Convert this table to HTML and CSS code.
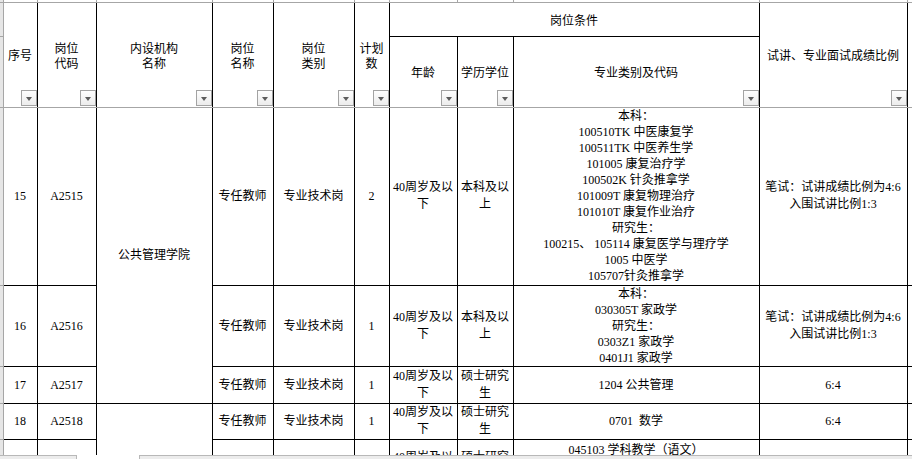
FILE: index.html
```html
<!DOCTYPE html>
<html lang="zh-CN">
<head>
<meta charset="utf-8">
<title>岗位表</title>
<link rel="stylesheet" href="styles.css">
</head>
<body>
<div class="sheet">
  <div class="grid">
    <table class="tbl">
      <colgroup>
        <col class="c-rh"><col class="c-no"><col class="c-code"><col class="c-org"><col class="c-name"><col class="c-type"><col class="c-num"><col class="c-age"><col class="c-edu"><col class="c-major"><col class="c-ratio"><col class="c-extra">
      </colgroup>
      <tbody>
        <tr class="r0">
          <td class="rh"></td><td></td><td></td><td></td><td></td><td></td><td></td><td></td><td></td><td></td><td></td><td></td>
        </tr>
        <tr class="h1">
          <td class="rh"></td>
          <th class="hd c1" rowspan="2">序号<span class="flt"></span></th>
          <th class="hd" rowspan="2">岗位<br>代码<span class="flt"></span></th>
          <th class="hd" rowspan="2">内设机构<br>名称<span class="flt"></span></th>
          <th class="hd" rowspan="2">岗位<br>名称<span class="flt"></span></th>
          <th class="hd" rowspan="2">岗位<br>类别<span class="flt"></span></th>
          <th class="hd" rowspan="2">计划<br>数<span class="flt"></span></th>
          <th class="grp" colspan="3">岗位条件</th>
          <th class="hd" rowspan="2">试讲、专业面试成绩比例<span class="flt"></span></th>
          <th class="hd extra" rowspan="2"></th>
        </tr>
        <tr class="h2">
          <td class="rh"></td>
          <th class="hd">年龄<span class="flt"></span></th>
          <th class="hd">学历学位<span class="flt"></span></th>
          <th class="hd">专业类别及代码<span class="flt"></span></th>
        </tr>
        <tr class="r15 first">
          <td class="rh"></td>
          <td class="c1">15</td>
          <td>A2515</td>
          <td class="org" rowspan="3">公共管理学院</td>
          <td>专任教师</td>
          <td>专业技术岗</td>
          <td>2</td>
          <td class="wrap">40周岁及以<br>下</td>
          <td class="wrap">本科及以<br>上</td>
          <td>本科：<br>100510TK 中医康复学<br>100511TK 中医养生学<br>101005 康复治疗学<br>100502K 针灸推拿学<br>101009T 康复物理治疗<br>101010T 康复作业治疗<br>研究生：<br>100215、 105114 康复医学与理疗学<br>1005 中医学<br>105707针灸推拿学</td>
          <td class="wrap">笔试：试讲成绩比例为4:6<br>入围试讲比例1:3</td>
          <td class="extra"></td>
        </tr>
        <tr class="r16">
          <td class="rh"></td>
          <td class="c1">16</td>
          <td>A2516</td>
          <td>专任教师</td>
          <td>专业技术岗</td>
          <td>1</td>
          <td class="wrap">40周岁及以<br>下</td>
          <td class="wrap">本科及以<br>上</td>
          <td>本科：<br>030305T 家政学<br>研究生：<br>0303Z1 家政学<br>0401J1 家政学</td>
          <td class="wrap">笔试：试讲成绩比例为4:6<br>入围试讲比例1:3</td>
          <td class="extra"></td>
        </tr>
        <tr class="r17">
          <td class="rh"></td>
          <td class="c1">17</td>
          <td>A2517</td>
          <td>专任教师</td>
          <td>专业技术岗</td>
          <td>1</td>
          <td class="wrap">40周岁及以<br>下</td>
          <td class="wrap">硕士研究<br>生</td>
          <td>1204 公共管理</td>
          <td>6:4</td>
          <td class="extra"></td>
        </tr>
        <tr class="r18">
          <td class="rh"></td>
          <td class="c1">18</td>
          <td>A2518</td>
          <td class="org" rowspan="3"></td>
          <td>专任教师</td>
          <td>专业技术岗</td>
          <td>1</td>
          <td class="wrap">40周岁及以<br>下</td>
          <td class="wrap">硕士研究<br>生</td>
          <td>0701&nbsp; 数学</td>
          <td>6:4</td>
          <td class="extra"></td>
        </tr>
        <tr class="r19">
          <td class="rh"></td>
          <td class="c1">19</td>
          <td>A2519</td>
          <td>专任教师</td>
          <td>专业技术岗</td>
          <td>1</td>
          <td class="wrap">40周岁及以<br>下</td>
          <td class="wrap">硕士研究<br>生</td>
          <td>045103 学科教学（语文）<br>050101 汉语言文学<br>0501 中国语言文学</td>
          <td>6:4</td>
          <td class="extra"></td>
        </tr>
        <tr class="r20">
          <td class="rh"></td>
          <td class="c1"></td><td></td><td></td><td></td><td></td><td></td><td></td><td></td><td></td><td class="extra"></td>
        </tr>
      </tbody>
    </table>
  </div>
  <div class="tabbar">
    <div class="tab-left"></div>
    <div class="tab-gap"></div>
    <div class="tab-right"></div>
  </div>
</div>
</body>
</html>
```

FILE: styles.css
```css
html, body {
  margin: 0;
  padding: 0;
  background: #fff;
}

body {
  width: 912px;
  height: 459px;
  overflow: hidden;
  font-family: "Liberation Serif", "Noto Sans CJK SC", serif;
  font-size: 12px;
  line-height: 16px;
  color: #000;
}

.sheet {
  display: flex;
  flex-direction: column;
  height: 459px;
}

.grid {
  flex: none;
  height: 455px;
  overflow: hidden;
}

.tbl {
  border-collapse: collapse;
  table-layout: fixed;
  width: 927px;
}

.c-rh { width: 3px; }
.c-no { width: 34px; }
.c-code { width: 59px; }
.c-org { width: 116px; }
.c-name { width: 61px; }
.c-type { width: 81px; }
.c-num { width: 35px; }
.c-age { width: 68px; }
.c-edu { width: 56px; }
.c-major { width: 246px; }
.c-ratio { width: 148px; }
.c-extra { width: 20px; }

.tbl td,
.tbl th {
  border: 1px solid #000;
  padding: 0;
  text-align: center;
  vertical-align: middle;
  font-weight: normal;
  white-space: nowrap;
}

.tbl th {
  position: relative;
  font-family: "Noto Sans CJK SC", sans-serif;
  line-height: 15px;
}

/* top partial row (gridline row) */
.r0 { height: 2px; }
.tbl .r0 td {
  border-top: none;
  border-color: #a6a6a6;
  font-size: 0;
  line-height: 0;
  height: 1px;
}

/* row header strip */
.tbl td.rh {
  border-left: none;
  border-color: #a6a6a6;
  background: #e6e6e6;
}

.tbl .c1 { border-left-color: #a6a6a6; }

.h1 { height: 34px; }
.h2 { height: 71px; }

.tbl .h1 th { border-top-color: #a6a6a6; }
.tbl th.hd { border-bottom-color: #a6a6a6; }
.tbl .first td { border-top-color: #a6a6a6; }
.tbl .first td.org { border-top-color: #a6a6a6; }

.tbl .extra { border-right: none; }

.r15 { height: 178px; }
.r16 { height: 81px; }
.r17 { height: 37px; }
.r18 { height: 36px; }
.r19 { height: 54px; }
.r20 { height: 60px; }

.wrap { line-height: 17px; }

/* filter dropdown button */
.flt {
  position: absolute;
  right: 0;
  bottom: 1px;
  width: 16px;
  height: 16px;
  box-sizing: border-box;
  border: 1px solid #a3a3a3;
  background: linear-gradient(#fefefe, #ececec);
}

.flt::after {
  content: "";
  position: absolute;
  left: 4px;
  top: 6px;
  border-left: 3.5px solid transparent;
  border-right: 3.5px solid transparent;
  border-top: 4px solid #5c5c5c;
}

/* bottom sheet-tab / scrollbar strip */
.tabbar {
  flex: none;
  height: 4px;
  display: flex;
}

.tab-left {
  width: 76px;
  background: #ececec;
  border-top: 1px solid #b8b8b8;
  border-right: 1px solid #b8b8b8;
}

.tab-gap {
  width: 62px;
  background: #fff;
}

.tab-right {
  flex: 1;
  background: #ececec;
  border-top: 1px solid #b8b8b8;
  border-left: 1px solid #b8b8b8;
}
```
